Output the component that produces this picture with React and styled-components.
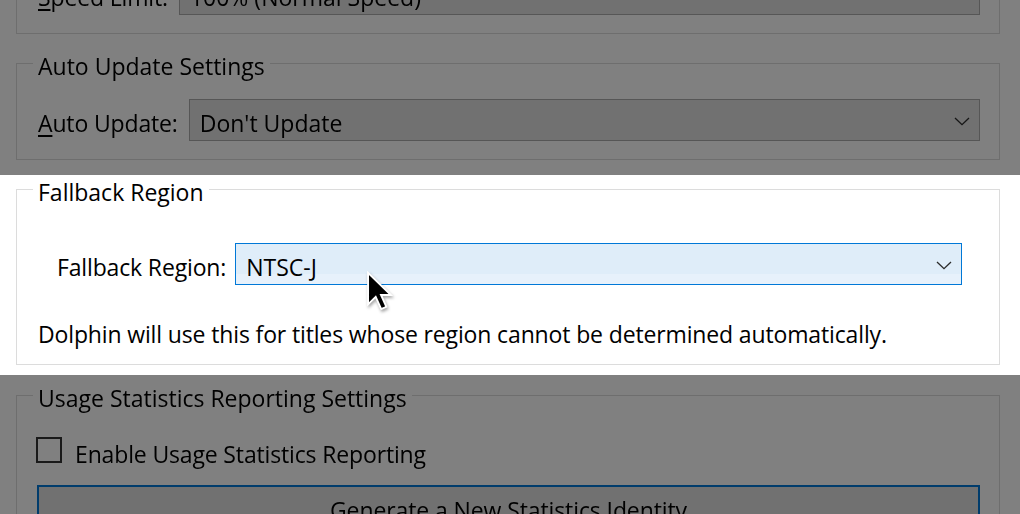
import React from "react";
import styled, { createGlobalStyle } from "styled-components";

const Global = createGlobalStyle`
  html, body {
    margin: 0;
    padding: 0;
    background: #fff;
  }
  body {
    font-family: "Open Sans", "Noto Sans", sans-serif;
    font-size: 23px;
    color: #000;
  }
`;

const Screen = styled.div`
  position: relative;
  width: 1020px;
  height: 514px;
  overflow: hidden;
  display: flex;
  flex-direction: column;
  background: #fff;
`;

// a horizontal slice of the dialog; the slices around the highlight are dimmed
const Band = styled.section`
  flex: 0 0 ${({ $h }) => $h}px;
  box-sizing: border-box;
  display: flex;
  flex-direction: column;
  justify-content: ${({ $bottom }) => ($bottom ? "flex-end" : "flex-start")};
  padding: ${({ $pt = 0 }) => $pt}px 20px ${({ $pb = 0 }) => $pb}px 16px;
  overflow: hidden;
  background: #fff;
  filter: ${({ $dim }) => ($dim ? "brightness(0.5)" : "none")};
`;

const GroupBox = styled.fieldset`
  flex-shrink: 0;
  min-width: 0;
  margin: 0 0 ${({ $mb = 0 }) => $mb}px;
  border: 1px solid #dcdcdc;
  padding: 0 19px ${({ $pb = 0 }) => $pb}px 21px;
`;

const Legend = styled.legend`
  margin-left: -5px;
  padding: 6px 5px 0;
  font-size: 23px;
  line-height: 23px;
  white-space: nowrap;
`;

const FormRow = styled.div`
  display: flex;
  align-items: center;
  gap: ${({ $gap = 11 }) => $gap}px;
  margin-top: ${({ $mt = 0 }) => $mt}px;
  padding: 0 ${({ $pr = 0 }) => $pr}px 0 ${({ $pl = 0 }) => $pl}px;
`;

const Label = styled.label`
  white-space: nowrap;
  line-height: 30px;
  letter-spacing: -0.15px;
  padding-top: ${({ $pt = 6 }) => $pt}px;
`;

const Mnemonic = styled.span`
  text-decoration: underline;
  text-decoration-thickness: 2px;
  text-underline-offset: 3px;
`;

const Combo = styled.div`
  flex: 1;
  height: 42px;
  box-sizing: border-box;
  display: flex;
  align-items: center;
  justify-content: space-between;
  padding: 0 9px 0 10px;
  border: 1px solid ${({ $hover }) => ($hover ? "#0078d7" : "#adadad")};
  background: ${({ $hover }) =>
    $hover ? "linear-gradient(#dfedf9 0 74%, #e7f1fb 74%)" : "#e1e1e1"};
`;

const ComboText = styled.span`
  line-height: 30px;
  padding-top: 6px;
  white-space: nowrap;
`;

const Chevron = styled.svg`
  flex-shrink: 0;
  margin-top: 2px;
`;

const Description = styled.p`
  margin: ${({ $mt = 0 }) => $mt}px 0 0;
  line-height: 30px;
  letter-spacing: -0.14px;
  white-space: nowrap;
`;

const CheckRow = styled.label`
  display: flex;
  align-items: center;
  gap: 13px;
  margin-top: ${({ $mt = 0 }) => $mt}px;
`;

const CheckBox = styled.span`
  flex-shrink: 0;
  width: 26px;
  height: 26px;
  box-sizing: border-box;
  margin-left: -2px;
  border: 2px solid #333;
  background: #fff;
`;

const Button = styled.button`
  display: block;
  width: calc(100% + 1px);
  height: 42px;
  margin: ${({ $mt = 0 }) => $mt}px 0 0 -1px;
  padding: 7px 0 0;
  box-sizing: border-box;
  border: 2px solid #0078d7;
  background: #e1e1e1;
  font: inherit;
  line-height: 30px;
  letter-spacing: -0.1px;
  color: #000;
`;

const Cursor = styled.svg`
  position: absolute;
  left: 366px;
  top: 271px;
  filter: drop-shadow(1px 2px 1.5px rgba(0, 0, 0, 0.35));
`;

const ChevronIcon = () => (
  <Chevron width="16" height="9" viewBox="0 0 16 9">
    <polyline points="1,1 8,7.6 15,1" fill="none" stroke="#2b2b2b" strokeWidth="1.3" />
  </Chevron>
);

const ComboBox = ({ value, hover }) => (
  <Combo $hover={hover}>
    <ComboText>{value}</ComboText>
    <ChevronIcon />
  </Combo>
);

const App = () => {
  return (
    <Screen>
      <Global />

      <Band $dim $bottom $h={175} $pb={15}>
        <GroupBox $mb={15} $pb={18}>
          <Legend>Basic Settings</Legend>
          <FormRow $mt={21}>
            <Label>
              <Mnemonic>S</Mnemonic>peed Limit:
            </Label>
            <ComboBox value="100% (Normal Speed)" />
          </FormRow>
        </GroupBox>
        <GroupBox $pb={18}>
          <Legend>Auto Update Settings</Legend>
          <FormRow $mt={21}>
            <Label>
              <Mnemonic>A</Mnemonic>uto Update:
            </Label>
            <ComboBox value="Don't Update" />
          </FormRow>
        </GroupBox>
      </Band>

      <Band $h={200}>
        <GroupBox $pb={15}>
          <Legend>Fallback Region</Legend>
          <FormRow $mt={39} $pl={19} $pr={18} $gap={9}>
            <Label>Fallback Region:</Label>
            <ComboBox value="NTSC-J" hover />
          </FormRow>
          <Description $mt={34}>
            Dolphin will use this for titles whose region cannot be determined automatically.
          </Description>
        </GroupBox>
      </Band>

      <Band $dim $h={139} $pt={6}>
        <GroupBox>
          <Legend>Usage Statistics Reporting Settings</Legend>
          <CheckRow $mt={21}>
            <CheckBox />
            <Label $pt={8}>Enable Usage Statistics Reporting</Label>
          </CheckRow>
          <Button $mt={16}>Generate a New Statistics Identity</Button>
        </GroupBox>
      </Band>

      <Cursor width="27" height="40" viewBox="0 0 14 21">
        <path
          d="M1 1 L1 17.5 L5 13.6 L7.9 20 L10.6 18.8 L7.8 12.6 L13 12.6 Z"
          fill="#000"
          stroke="#fff"
          strokeWidth="1"
          strokeLinejoin="miter"
        />
      </Cursor>
    </Screen>
  );
};

export default App;
